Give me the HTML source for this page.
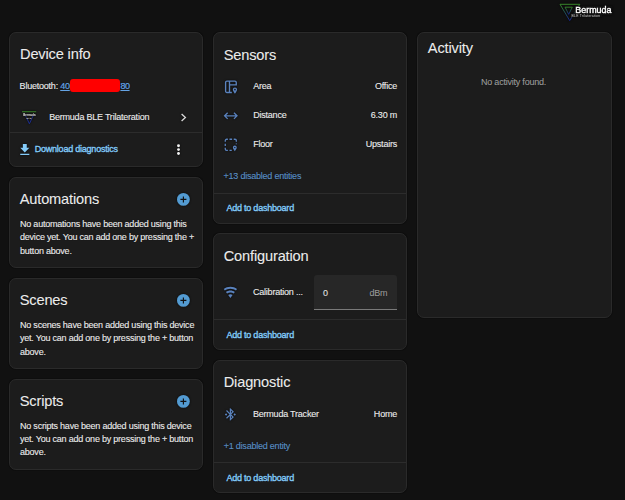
<!DOCTYPE html>
<html><head><meta charset="utf-8">
<style>
*{box-sizing:border-box;margin:0;padding:0}
html,body{width:625px;height:500px;overflow:hidden;background:#111111;font-family:"Liberation Sans",sans-serif;color:#e1e1e1}
.card{position:absolute;background:#1c1c1c;border:1px solid #2a2a2a;border-radius:7px;box-shadow:0 0 0 1px #0e0e0e}
.t{position:absolute;white-space:nowrap;line-height:1;text-shadow:0 0 1px rgba(0,0,0,0.7)}
.title{font-size:14.6px;letter-spacing:-0.15px;color:#ececec;-webkit-text-stroke:0.1px currentColor}
.body{font-size:9px;letter-spacing:-0.22px;color:#ededed;-webkit-text-stroke:0.12px currentColor}
.btn{font-size:9px;letter-spacing:-0.22px;-webkit-text-stroke:0.35px #84ccfa;color:#84ccfa}
.dis{font-size:9px;letter-spacing:-0.22px;color:#5b8fc4;-webkit-text-stroke:0.15px currentColor}
.div{position:absolute;height:1px;background:#2c2c2c}
svg{position:absolute;overflow:visible;filter:drop-shadow(0 0 0.8px rgba(0,0,0,0.8))}
.r{text-align:right}
.para{position:absolute;font-size:9px;letter-spacing:-0.22px;line-height:13.4px;color:#ececec;width:178px;-webkit-text-stroke:0.15px currentColor}
</style></head><body>

<!-- Column 1 -->
<div class="card" style="left:9px;top:32px;width:194px;height:135px"></div>
<div class="t title" id="ttl_dev" style="left:20px;top:47.10px">Device info</div>
<div class="t body" id="bt" style="left:19.6px;top:81.76px">Bluetooth: <span style="color:#65a3e3;text-decoration:underline">40</span></div>
<div class="t body" style="left:120.4px;top:81.76px;color:#65a3e3;text-decoration:underline;letter-spacing:-0.4px">80</div>
<div style="position:absolute;left:70px;top:79.2px;width:50.4px;height:12.8px;background:#ff0000;border-radius:3px"></div>
<svg style="left:21px;top:109.6px" width="17" height="15" viewBox="0 0 17 15">
  <rect x="1" y="1.3" width="14.2" height="0.9" fill="#3a8f2a"/>
  <path d="M4.3 5 L8.4 13.8 L12.5 5" fill="none" stroke="#1c2f96" stroke-width="0.95"/>
  <rect x="2" y="3.6" width="12.6" height="2.4" fill="#1c1c1c"/>
  <text x="2.3" y="5.8" font-family="Liberation Sans" font-weight="bold" font-size="3.1" fill="#e0e0e0" textLength="12.2" lengthAdjust="spacingAndGlyphs">Bermuda</text>
  <rect x="5.4" y="6.5" width="5.6" height="2.1" fill="#1c1c1c"/>
  <text x="5.6" y="8.5" font-family="Liberation Sans" font-weight="bold" font-size="2.3" fill="#c8c8c8" textLength="5" lengthAdjust="spacingAndGlyphs">BLE</text>
</svg>
<div class="t body" id="ble" style="left:49.2px;top:112.76px">Bermuda BLE Trilateration</div>
<svg style="left:180px;top:113px" width="7" height="9" viewBox="0 0 7 9"><path d="M1.6 0.9 L5.4 4.5 L1.6 8.1" fill="none" stroke="#d8d8d8" stroke-width="1.35"/></svg>
<div class="div" style="left:10px;top:132px;width:192px"></div>
<svg style="left:17.2px;top:141.6px" width="15.6" height="15.6" viewBox="0 0 24 24"><path d="M5,20H19V18H5M19,9H15V3H9V9H5L12,16L19,9Z" fill="#84ccfa"/></svg>
<div class="t btn" id="dl" style="left:34.7px;top:145.26px">Download diagnostics</div>
<svg style="left:176px;top:143px" width="5" height="14" viewBox="0 0 5 14"><circle cx="2.5" cy="2.7" r="1.45" fill="#f0f0f0"/><circle cx="2.5" cy="6.6" r="1.45" fill="#f0f0f0"/><circle cx="2.5" cy="10.45" r="1.45" fill="#f0f0f0"/></svg>

<div class="card" style="left:9px;top:177px;width:194px;height:91px"></div>
<div class="t title" id="ttl_auto" style="left:19.7px;top:192px">Automations</div>
<svg style="left:176.8px;top:193px" width="13" height="13" viewBox="0 0 13 13"><circle cx="6.4" cy="6.4" r="6.4" fill="#539bd2"/><path d="M3.4 6.4 H9.4 M6.4 3.4 V9.4" stroke="#111" stroke-width="1.15"/></svg>
<div class="t body" style="left:20px;top:220px">No automations have been added using this</div>
<div class="t body" style="left:20px;top:233px">device yet. You can add one by pressing the +</div>
<div class="t body" style="left:20px;top:247px">button above.</div>

<div class="card" style="left:9px;top:278px;width:194px;height:91px"></div>
<div class="t title" id="ttl_scn" style="left:19.7px;top:293.40px">Scenes</div>
<svg style="left:176.8px;top:294px" width="13" height="13" viewBox="0 0 13 13"><circle cx="6.4" cy="6.4" r="6.4" fill="#539bd2"/><path d="M3.4 6.4 H9.4 M6.4 3.4 V9.4" stroke="#111" stroke-width="1.15"/></svg>
<div class="t body" style="left:20px;top:321px">No scenes have been added using this device</div>
<div class="t body" style="left:20px;top:334px">yet. You can add one by pressing the + button</div>
<div class="t body" style="left:20px;top:348px">above.</div>

<div class="card" style="left:9px;top:379px;width:194px;height:91px"></div>
<div class="t title" id="ttl_scr" style="left:19.7px;top:394.20px">Scripts</div>
<svg style="left:176.8px;top:395px" width="13" height="13" viewBox="0 0 13 13"><circle cx="6.4" cy="6.4" r="6.4" fill="#539bd2"/><path d="M3.4 6.4 H9.4 M6.4 3.4 V9.4" stroke="#111" stroke-width="1.15"/></svg>
<div class="t body" style="left:20px;top:422px">No scripts have been added using this device</div>
<div class="t body" style="left:20px;top:435px">yet. You can add one by pressing the + button</div>
<div class="t body" style="left:20px;top:448px">above.</div>

<!-- Column 2 -->
<div class="card" style="left:213px;top:32px;width:194px;height:192px"></div>
<div class="t title" id="ttl_sens" style="left:223.7px;top:48.20px">Sensors</div>

<svg style="left:222.8px;top:78.7px" width="15.6" height="15.6" viewBox="0 0 24 24"><path d="M13.6 20.8 H6 a2 2 0 0 1 -2 -2 V5.3 a2 2 0 0 1 2 -2 H18.4 a2 2 0 0 1 2 2 V9 H10 M10 3.3 V20.8" fill="none" stroke="#5a82bd" stroke-width="2.1"/><path d="M18.4 22.6 C16.9 20.5 15.1 18.4 15.1 16.2 a3.3 3.3 0 0 1 6.6 0 C21.7 18.4 19.9 20.5 18.4 22.6 Z M18.4 15.1 a1.1 1.1 0 1 0 0.01 0 Z" fill="#5a82bd" fill-rule="evenodd"/></svg>
<svg style="left:222.8px;top:107.7px" width="15.6" height="15.6" viewBox="0 0 24 24"><path d="M6.45,17.45L1,12L6.45,6.55L7.86,7.96L4.83,11H19.17L16.14,7.96L17.55,6.55L23,12L17.55,17.45L16.14,16.04L19.17,13H4.83L7.86,16.04L6.45,17.45Z" fill="#5a82bd"/></svg>
<svg style="left:222.8px;top:137.3px" width="15.6" height="15.6" viewBox="0 0 24 24"><g fill="none" stroke="#5a82bd" stroke-width="2"><path d="M3.5 7.5 V5.5 a2 2 0 0 1 2 -2 H7.5"/><path d="M16.5 3.5 H18.5 a2 2 0 0 1 2 2 V7.5"/><path d="M3.5 16.5 V18.5 a2 2 0 0 0 2 2 H7.5"/><path d="M10 3.5 H14 M10 20.5 H13.5 M3.5 10.2 V13.8 M20.5 10 V11.2"/></g><path d="M18.2 22 C16.8 20 15.2 18 15.2 16.2 a3 3 0 0 1 6 0 C21.2 18 19.6 20 18.2 22 Z M18.2 15.2 a1 1 0 1 0 0.01 0 Z" fill="#5a82bd" fill-rule="evenodd"/></svg>
<div class="t body" style="left:253.2px;top:81.66px">Area</div>
<div class="t body r" style="right:228px;top:81.66px">Office</div>
<div class="t body" style="left:253.2px;top:111.0px">Distance</div>
<div class="t body r" style="right:228px;top:111.1px">6.30 m</div>
<div class="t body" style="left:253.2px;top:140.4px">Floor</div>
<div class="t body r" style="right:228px;top:140.4px">Upstairs</div>
<div class="t dis" style="left:223.5px;top:172.26px">+13 disabled entities</div>
<div class="div" style="left:214px;top:193px;width:192px"></div>
<div class="t btn" style="left:226.4px;top:204.36px">Add to dashboard</div>

<div class="card" style="left:213px;top:233px;width:194px;height:117px"></div>
<div class="t title" id="ttl_conf" style="left:223.7px;top:249.40px">Configuration</div>
<svg style="left:223.2px;top:285.1px" width="14.8" height="14.8" viewBox="0 0 24 24"><path d="M12,21L15.6,16.2C14.6,15.45 13.35,15 12,15C10.65,15 9.4,15.45 8.4,16.2L12,21M12,3C7.95,3 4.21,4.34 1.2,6.6L3,9C5.5,7.12 8.62,6 12,6C15.38,6 18.5,7.12 21,9L22.8,6.6C19.79,4.34 16.05,3 12,3M12,9C9.3,9 6.81,9.89 4.8,11.4L6.6,13.8C8.1,12.67 9.97,12 12,12C14.03,12 15.9,12.67 17.4,13.8L19.2,11.4C17.19,9.89 14.7,9 12,9Z" fill="#5a82bd"/></svg>
<div class="t body" style="left:253px;top:288px">Calibration ...</div>
<div style="position:absolute;left:313.8px;top:275.2px;width:83.2px;height:34.5px;background:#272727;border-radius:3px 3px 0 0;border-bottom:1px solid #7a7a7a"></div>
<div class="t body" style="left:322.9px;top:288.86px;color:#e1e1e1">0</div>
<div class="t body r" style="right:237.6px;top:289.16px;color:#9b9b9b">dBm</div>
<div class="div" style="left:214px;top:319px;width:192px"></div>
<div class="t btn" style="left:226.4px;top:331.16px">Add to dashboard</div>

<div class="card" style="left:213px;top:360px;width:194px;height:133px"></div>
<div class="t title" id="ttl_diag" style="left:223.7px;top:375.1px">Diagnostic</div>
<svg style="left:223.2px;top:406.7px" width="14.8" height="14.8" viewBox="0 0 24 24"><path d="M19,10L17,12L19,14L21,12M14.88,16.29L13,18.17V14.41M13,5.83L14.88,7.71L13,9.58M17.71,7.71L12,2H11V9.58L6.41,5L5,6.41L10.59,12L5,17.58L6.41,19L11,14.41V22H12L17.71,16.29L13.41,12M7,12L5,10L3,12L5,14L7,12Z" fill="#5a82bd"/></svg>
<div class="t body" style="left:253px;top:409.9px">Bermuda Tracker</div>
<div class="t body r" style="right:228px;top:409.9px">Home</div>
<div class="t dis" style="left:223.7px;top:442.2px">+1 disabled entity</div>
<div class="div" style="left:214px;top:462px;width:192px"></div>
<div class="t btn" style="left:226.4px;top:473.96px">Add to dashboard</div>

<!-- Column 3 -->
<div class="card" style="left:417px;top:32px;width:195px;height:286px"></div>
<div class="t title" id="ttl_act" style="left:427.8px;top:41.1px">Activity</div>
<div class="t body" style="left:481px;top:78px;color:#9b9b9b">No activity found.</div>


<svg style="left:556px;top:1px" width="62" height="22" viewBox="0 0 62 22">
 <defs><linearGradient id="lg" x1="0" y1="0" x2="0" y2="1"><stop offset="0" stop-color="#3a8c2a"/><stop offset="0.45" stop-color="#255a55"/><stop offset="1" stop-color="#1a2896"/></linearGradient></defs>
 <path d="M4 3.3 H23.8 L13.7 19.6 Z" fill="none" stroke="url(#lg)" stroke-width="0.95"/>
 <path d="M9.1 6.2 H16.3 L12.7 13.4 Z" fill="none" stroke="url(#lg)" stroke-width="0.9"/>
 <rect x="18.5" y="5" width="38" height="9" fill="#111"/>
 <text x="19.3" y="11.6" font-family="Liberation Sans" font-size="8.3" fill="#ffffff" stroke="#ffffff" stroke-width="0.35" textLength="36.2" lengthAdjust="spacingAndGlyphs">Bermuda</text>
 <rect x="15" y="12.6" width="31" height="3.6" fill="#111"/>
 <text x="15.6" y="15.6" font-family="Liberation Sans" font-size="3.3" fill="#d0d0d0" letter-spacing="0.25">BLE Trilateration</text>
</svg>
</body></html>
